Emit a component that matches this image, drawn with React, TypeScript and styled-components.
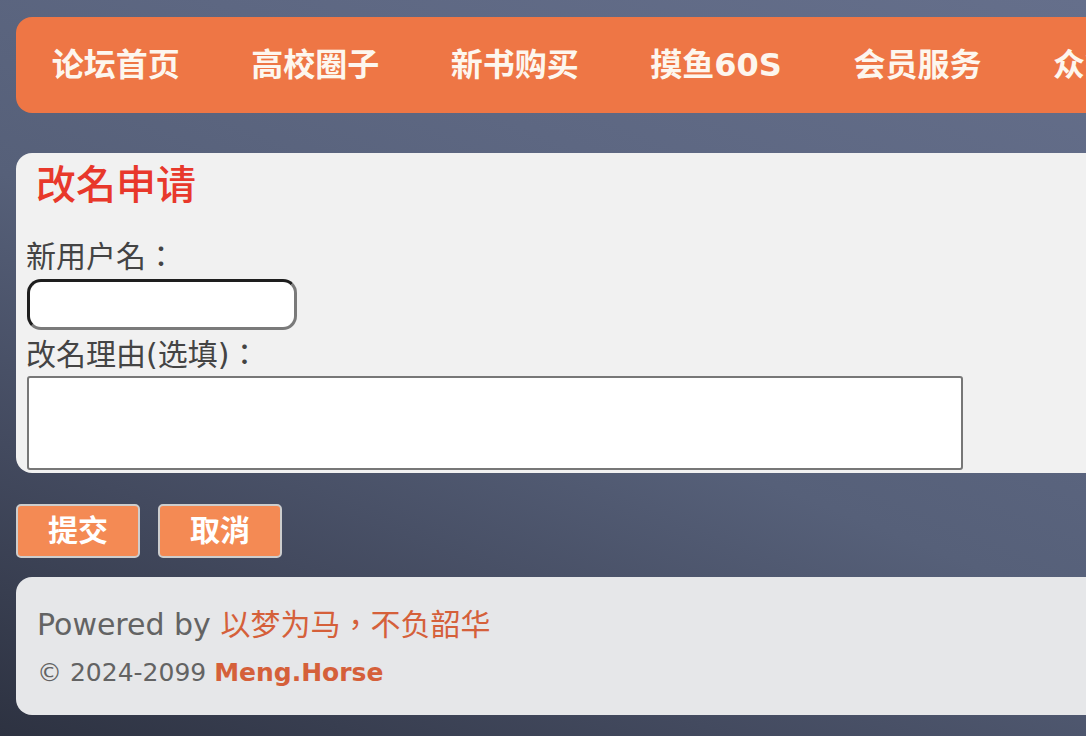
import React from "react";
import styled, { createGlobalStyle } from "styled-components";

const GlobalStyle = createGlobalStyle`
  html, body {
    margin: 0;
    padding: 0;
    overflow: hidden;
  }
  body {
    min-height: 736px;
    font-family: "DejaVu Sans", "Noto Sans CJK TC", sans-serif;
    background: linear-gradient(22deg, #2d3241 0%, #434a5f 25%, #566079 48%, #5d6782 70%, #656f8b 100%);
  }
`;

const Page = styled.div`
  width: 1400px;
  min-height: 736px;
  padding: 17px 0 0 16px;
  box-sizing: border-box;
  display: flex;
  flex-direction: column;
`;

const Nav = styled.nav`
  height: 96px;
  display: flex;
  align-items: center;
  background: #ee7645;
  border-radius: 16px;
`;

const NavItem = styled.a`
  padding: 0 35.75px 0 35.75px;
  font-size: 32px;
  font-weight: bold;
  color: #fdf6ee;
  text-decoration: none;
  white-space: nowrap;
  line-height: 40px;
`;

const Panel = styled.section`
  margin-top: 40px;
  background: #f1f1f1;
  border-radius: 16px;
  padding: 8px 10px 3px 10px;
`;

const Title = styled.h2`
  margin: 0 0 30px 10px;
  font-size: 40px;
  line-height: 48px;
  font-weight: 500;
  color: #e8382b;
`;

const Label = styled.label<{ $gap?: number }>`
  display: block;
  margin-top: ${(p) => p.$gap ?? 0}px;
  font-size: 30px;
  line-height: 36px;
  color: #444;
`;

const TextInput = styled.input`
  display: block;
  box-sizing: border-box;
  margin: 4px 0 0 1px;
  width: 270px;
  height: 51px;
  border: 3px solid;
  border-color: #1e1e1e #7a7a7a #7a7a7a #1e1e1e;
  border-radius: 14px;
  background: #fff;
  outline: none;
`;

const TextArea = styled.textarea`
  display: block;
  box-sizing: border-box;
  margin: 3px 0 0 1px;
  width: 936px;
  height: 94px;
  border: 2px solid #777;
  border-radius: 3px;
  background: #fff;
  resize: none;
  outline: none;
`;

const Actions = styled.div`
  display: flex;
  gap: 18px;
  margin-top: 31px;
`;

const Button = styled.button`
  box-sizing: border-box;
  width: 124px;
  height: 54px;
  padding: 0;
  border: 2px solid #cdcdcd;
  border-radius: 5px;
  background: #f48a54;
  color: #fff;
  font-family: "DejaVu Sans", "Noto Sans CJK TC", sans-serif;
  font-size: 30px;
  font-weight: bold;
  line-height: 36px;
`;

const Footer = styled.footer`
  margin-top: 19px;
  height: 138px;
  box-sizing: border-box;
  background: #e6e7e9;
  border-radius: 16px;
  padding: 28px 21px 0 21px;
`;

const FootLine = styled.div<{ $size: number; $lh: number; $gap?: number }>`
  font-size: ${(p) => p.$size}px;
  line-height: ${(p) => p.$lh}px;
  margin-top: ${(p) => p.$gap ?? 0}px;
  color: #636363;
  white-space: nowrap;
`;

const Accent = styled.span<{ $bold?: boolean }>`
  color: #d5603a;
  font-weight: ${(p) => (p.$bold ? "bold" : "normal")};
`;

const navItems = ["论坛首页", "高校圈子", "新书购买", "摸鱼60S", "会员服务", "众筹项目"];

export default function App() {
  return (
    <>
      <GlobalStyle />
      <Page>
        <Nav>
          {navItems.map((t) => (
            <NavItem key={t} href="#">
              {t}
            </NavItem>
          ))}
        </Nav>
        <Panel>
          <Title>改名申请</Title>
          <Label htmlFor="newname">新用户名：</Label>
          <TextInput id="newname" type="text" />
          <Label htmlFor="reason" $gap={7}>
            改名理由(选填)：
          </Label>
          <TextArea id="reason" />
        </Panel>
        <Actions>
          <Button>提交</Button>
          <Button>取消</Button>
        </Actions>
        <Footer>
          <FootLine $size={30} $lh={40}>
            Powered by <Accent>以梦为马，不负韶华</Accent>
          </FootLine>
          <FootLine $size={25} $lh={34} $gap={11}>
            © 2024-2099 <Accent $bold>Meng.Horse</Accent>
          </FootLine>
        </Footer>
      </Page>
    </>
  );
}
